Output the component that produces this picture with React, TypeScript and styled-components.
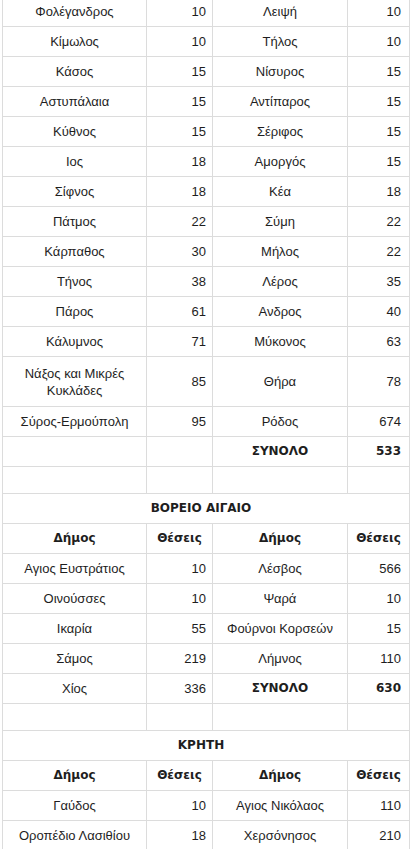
import React from "react";
import styled, { createGlobalStyle } from "styled-components";

const GlobalStyle = createGlobalStyle`
    html, body {
        margin: 0;
        padding: 0;
        background: #ffffff;
    }
    body {
        font-family: "Liberation Sans", Arial, sans-serif;
        color: #1e1e1e;
    }
`;

type Row = [string, string, string, string];

type Region = {
    title?: string;
    rows: Row[];
    totalRow: Row;
};

const cyclades: Row[] = [
    ["Φολέγανδρος", "10", "Λειψή", "10"],
    ["Κίμωλος", "10", "Τήλος", "10"],
    ["Κάσος", "15", "Νίσυρος", "15"],
    ["Αστυπάλαια", "15", "Αντίπαρος", "15"],
    ["Κύθνος", "15", "Σέριφος", "15"],
    ["Ιος", "18", "Αμοργός", "15"],
    ["Σίφνος", "18", "Κέα", "18"],
    ["Πάτμος", "22", "Σύμη", "22"],
    ["Κάρπαθος", "30", "Μήλος", "22"],
    ["Τήνος", "38", "Λέρος", "35"],
    ["Πάρος", "61", "Ανδρος", "40"],
    ["Κάλυμνος", "71", "Μύκονος", "63"],
    ["Νάξος και Μικρές Κυκλάδες", "85", "Θήρα", "78"],
    ["Σύρος-Ερμούπολη", "95", "Ρόδος", "674"],
];

const regions: Region[] = [
    {
        rows: cyclades,
        totalRow: ["", "", "ΣΥΝΟΛΟ", "533"],
    },
    {
        title: "ΒΟΡΕΙΟ ΑΙΓΑΙΟ",
        rows: [
            ["Αγιος Ευστράτιος", "10", "Λέσβος", "566"],
            ["Οινούσσες", "10", "Ψαρά", "10"],
            ["Ικαρία", "55", "Φούρνοι Κορσεών", "15"],
            ["Σάμος", "219", "Λήμνος", "110"],
        ],
        totalRow: ["Χίος", "336", "ΣΥΝΟΛΟ", "630"],
    },
    {
        title: "ΚΡΗΤΗ",
        rows: [
            ["Γαύδος", "10", "Αγιος Νικόλαος", "110"],
            ["Οροπέδιο Λασιθίου", "18", "Χερσόνησος", "210"],
        ],
        totalRow: ["", "", "", ""],
    },
];

const DataRow: React.FC<{ row: Row; total?: boolean }> = ({ row, total }) => (
    <BodyRow $tall={row[0].length > 20}>
        <NameCell>{row[0]}</NameCell>
        <SeatsCell>{row[1]}</SeatsCell>
        <NameCell $bold={total}>{row[2]}</NameCell>
        <SeatsCell $bold={total} $last>
            {row[3]}
        </SeatsCell>
    </BodyRow>
);

export default function App() {
    return (
        <Page>
            <GlobalStyle />
            <SeatsTable>
                <colgroup>
                    <col style={{ width: 144 }} />
                    <col style={{ width: 66 }} />
                    <col style={{ width: 135 }} />
                    <col style={{ width: 62 }} />
                </colgroup>
                <tbody>
                    {regions.map((region, i) => (
                        <React.Fragment key={i}>
                            {region.title && (
                                <>
                                    <tr>
                                        <TitleCell colSpan={4}>{region.title}</TitleCell>
                                    </tr>
                                    <tr>
                                        <HeadCell>Δήμος</HeadCell>
                                        <HeadCell>Θέσεις</HeadCell>
                                        <HeadCell>Δήμος</HeadCell>
                                        <HeadCell>Θέσεις</HeadCell>
                                    </tr>
                                </>
                            )}
                            {region.rows.map((row) => (
                                <DataRow key={row[0]} row={row} />
                            ))}
                            {i < regions.length - 1 && (
                                <>
                                    <DataRow row={region.totalRow} total />
                                    <tr>
                                        <SpacerCell />
                                        <SpacerCell />
                                        <SpacerCell />
                                        <SpacerCell />
                                    </tr>
                                </>
                            )}
                        </React.Fragment>
                    ))}
                </tbody>
            </SeatsTable>
        </Page>
    );
}

const Page = styled.div`
    padding-left: 2px;
    height: 849px;
    overflow: hidden;
`;

const SeatsTable = styled.table`
    width: 407px;
    margin-top: -4px;
    border-collapse: collapse;
    table-layout: fixed;
    font-size: 13px;
    line-height: 17px;

    td {
        border: 1px solid #dcdcdc;
        vertical-align: middle;
    }
`;

const BodyRow = styled.tr<{ $tall?: boolean }>`
    td {
        height: ${(p) => (p.$tall ? 49 : 29)}px;
    }
`;

const NameCell = styled.td<{ $bold?: boolean }>`
    padding: 0 6px;
    text-align: center;
    font-family: ${(p) =>
        p.$bold ? '"DejaVu Sans", Verdana, sans-serif' : "inherit"};
    font-size: ${(p) => (p.$bold ? 12 : 13)}px;
    font-weight: ${(p) => (p.$bold ? 700 : 400)};
`;

const SeatsCell = styled.td<{ $bold?: boolean; $last?: boolean }>`
    padding: 0 ${(p) => (p.$last ? 8 : 6)}px 0 4px;
    text-align: right;
    font-family: ${(p) =>
        p.$bold ? '"DejaVu Sans", Verdana, sans-serif' : "inherit"};
    font-size: ${(p) => (p.$bold ? 12 : 13)}px;
    font-weight: ${(p) => (p.$bold ? 700 : 400)};
`;

const SpacerCell = styled.td`
    height: 26px;
    padding: 0;
`;

const TitleCell = styled.td`
    height: 29px;
    padding: 0 10px 0 0;
    text-align: center;
    font-family: "DejaVu Sans", Verdana, sans-serif;
    font-size: 12px;
    font-weight: 700;
`;

const HeadCell = styled.td`
    height: 29px;
    padding: 0 2px;
    text-align: center;
    font-family: "DejaVu Sans", Verdana, sans-serif;
    font-size: 12px;
    font-weight: 700;
`;
